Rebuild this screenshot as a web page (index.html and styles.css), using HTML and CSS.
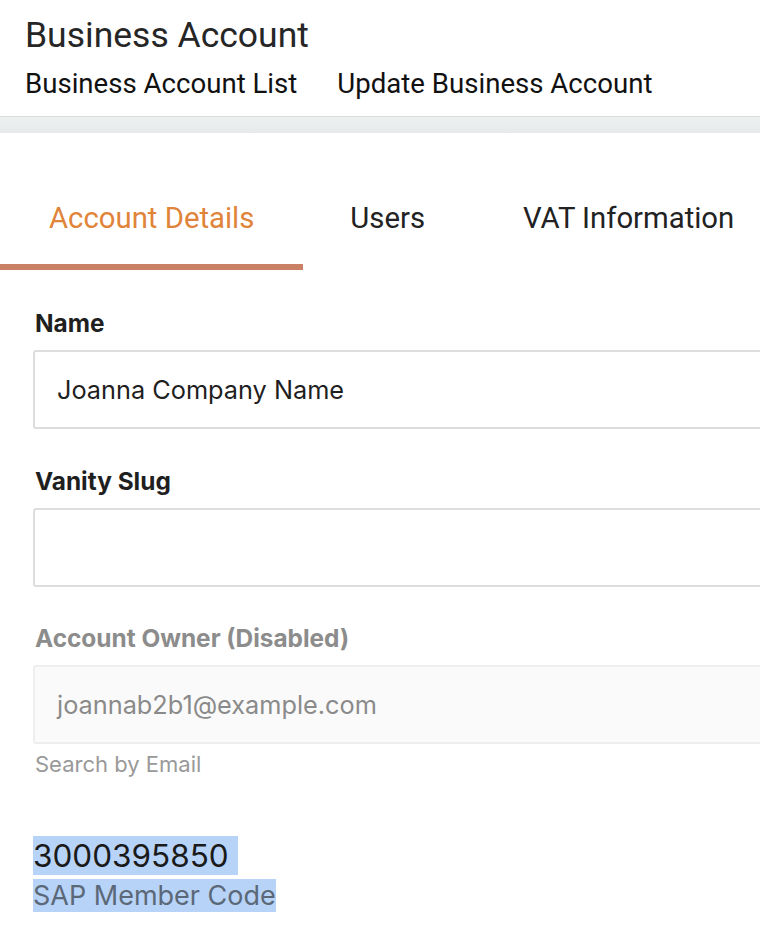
FILE: index.html
```html
<!DOCTYPE html>
<html lang="en">
<head>
<meta charset="utf-8">
<title>Business Account</title>
<link rel="stylesheet" href="styles.css">
</head>
<body>
<header class="page-header">
  <h1 class="page-title">Business Account</h1>
  <nav class="breadcrumbs">
    <a class="crumb" href="#">Business Account List</a>
    <span class="crumb">Update Business Account</span>
  </nav>
</header>
<div class="band"></div>
<main class="content">
  <div class="tabs">
    <div class="tab tab-active">Account Details</div>
    <div class="tab">Users</div>
    <div class="tab">VAT Information</div>
  </div>
  <form class="form">
    <div class="field">
      <label class="label">Name</label>
      <div class="input">Joanna Company Name</div>
    </div>
    <div class="field">
      <label class="label">Vanity Slug</label>
      <div class="input"></div>
    </div>
    <div class="field field-disabled">
      <label class="label">Account Owner (Disabled)</label>
      <div class="input">joannab2b1@example.com</div>
      <div class="help">Search by Email</div>
    </div>
    <div class="code">
      <div class="code-value"><span class="sel">3000395850&nbsp;</span></div>
      <div class="code-label"><span class="sel">SAP Member Code</span></div>
    </div>
  </form>
</main>
</body>
</html>
```

FILE: styles.css
```css
html, body {
  margin: 0;
  padding: 0;
  background: #ffffff;
  overflow: hidden;
}
body {
  font-family: Roboto, "Liberation Sans", sans-serif;
  color: #1f1f1f;
}
.page-header {
  padding: 15px 0 0 25px;
  height: 116px;
  box-sizing: border-box;
}
.page-title {
  margin: 0;
  font-weight: 400;
  font-size: 35.5px;
  line-height: 40px;
  color: #262626;
}
.breadcrumbs {
  display: flex;
  gap: 40px;
  margin-top: 12px;
  font-size: 27.6px;
  line-height: 34px;
}
.crumb {
  color: #111;
  text-decoration: none;
}
.band {
  border-top: 1px solid #dadcdc;
  height: 16px;
  background: linear-gradient(#edf0f0, #e6eaea);
}
.tabs {
  display: flex;
  height: 137px;
  align-items: stretch;
}
.tab {
  padding: 65px 49px 0;
  font-size: 29.3px;
  line-height: 40px;
  color: #222;
  white-space: nowrap;
}
.tab:nth-child(2) {
  padding-left: 47px;
}
.tab-active {
  color: #e0843a;
  border-bottom: 6px solid #c98064;
}
.form {
  padding: 0 0 0 33px;
  font-family: Inter, "Liberation Sans", sans-serif;
}
.field {
  margin-top: 37px;
}
.field:first-child {
  margin-top: 38px;
}
.label {
  display: block;
  padding-left: 2px;
  font-weight: 700;
  font-size: 24.4px;
  line-height: 30px;
  color: #1f1f1f;
  margin-bottom: 12px;
}
.field-disabled {
  margin-top: 36px;
}
.input {
  height: 79px;
  box-sizing: border-box;
  border: 2px solid #dddddd;
  border-right: none;
  border-radius: 3px 0 0 3px;
  padding: 0 22px;
  display: flex;
  align-items: center;
  font-size: 25.3px;
  color: #1f1f1f;
  background: #fff;
}
.field-disabled .label {
  color: #8c8c8c;
}
.field-disabled .input {
  background: #fafafa;
  border-color: #eeeeee;
  color: #8a8a8a;
}
.help {
  margin-top: 6px;
  padding-left: 2px;
  font-size: 22px;
  line-height: 28px;
  color: #999999;
}
.code {
  margin-top: 59px;
}
.code-value {
  font-size: 31.5px;
  line-height: 38px;
  color: #1a1a1a;
}
.code-label {
  margin-top: 4px;
  font-size: 27px;
  line-height: 33px;
  color: #5b6877;
}
.sel {
  background: #b7d3f7;
}
```
